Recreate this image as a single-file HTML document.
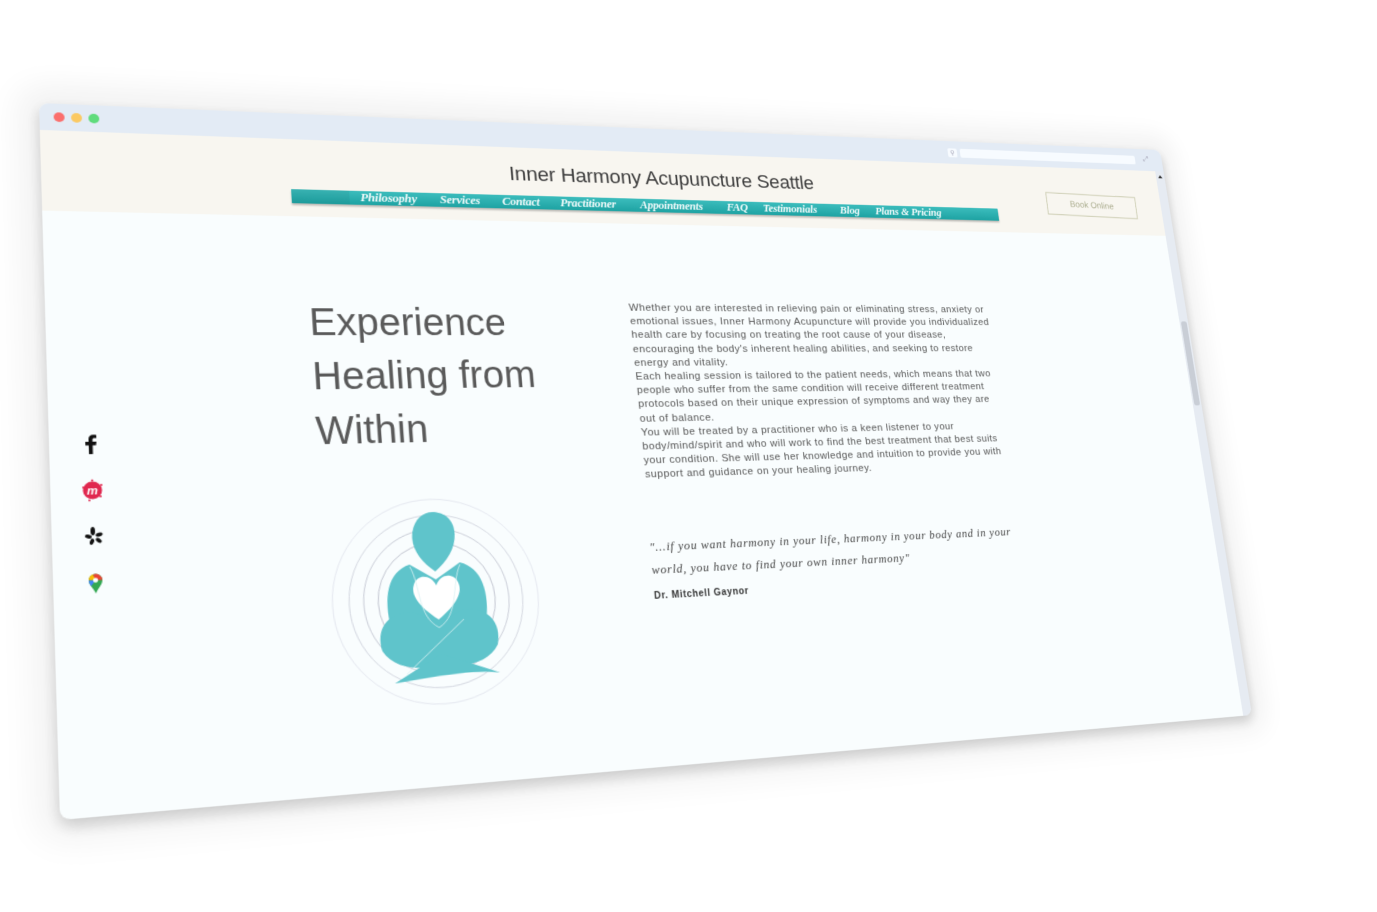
<!DOCTYPE html>
<html><head><meta charset="utf-8"><style>
html,body{margin:0;padding:0;background:#fff;width:1377px;height:912px;overflow:hidden}
#p{position:absolute;left:0;top:0;width:1280px;height:690px;transform-origin:0 0;
transform:matrix3d(1.10625,0.066521,0,0.00019868,0.023549,0.94502,0,-0.00011477,0,0,1,0,39,103,0,1);
border-radius:9px;background:#f9fdfe;overflow:hidden;
box-shadow:0 0 30px 20px rgba(0,0,0,0.05),0 6px 14px rgba(0,0,0,0.18);font-family:"Liberation Sans",sans-serif}
.tb{position:absolute;left:0;top:0;width:1280px;height:28px;background:#e3ebf5}
.dot{position:absolute;top:9px;width:10px;height:10px;border-radius:50%}
.hd{position:absolute;left:0;top:28px;width:1268px;height:83px;background:#f8f6f0}
.sb{position:absolute;right:0;top:28px;width:12px;height:662px;background:#e6ebf2}
.th{position:absolute;right:2px;top:191px;width:8px;height:104px;background:#c9ced6;border-radius:3px}
.title{position:absolute;left:433px;top:45px;width:410px;text-align:center;font-size:22.5px;color:#3d3d3d;letter-spacing:-0.2px}
.nav{position:absolute;left:236px;top:82px;width:807px;height:15px;background:linear-gradient(#3bbcbc,#1ea3a3);box-shadow:0 2px 2px rgba(0,0,0,.25)}
.nav span{position:absolute;top:-1px;font-family:"Liberation Serif",serif;font-style:italic;font-size:13px;color:#f2fbfb;white-space:nowrap;font-weight:bold;letter-spacing:-0.2px}
.book{position:absolute;left:1110px;top:61px;width:121px;height:26px;border:1px solid #c5c6a8;color:#a9ab8c;font-size:11px;text-align:center;line-height:26px;transform:rotate(1.5deg)}
h1{position:absolute;left:246px;top:195px;margin:0;font-weight:normal;font-size:40px;line-height:56px;color:#5a5a5a}
.body{position:absolute;left:581px;top:198px;font-size:11.6px;line-height:15.2px;color:#555;white-space:nowrap;letter-spacing:0.5px}
.q{position:absolute;left:578px;top:453px;font-family:"Liberation Serif",serif;font-style:italic;font-size:13px;line-height:24px;color:#444;letter-spacing:0.8px;white-space:nowrap}
.au{position:absolute;left:578px;top:511px;font-size:10px;font-weight:bold;color:#333;letter-spacing:0.7px}
.ic{position:absolute;left:26px;width:22px;height:22px}
</style></head><body>
<div id="p">
<div class="tb">
<div class="dot" style="left:13px;background:#fb6f6d"></div>
<div class="dot" style="left:29px;background:#fbc962"></div>
<div class="dot" style="left:45px;background:#5fdc7c"></div>
<div style="position:absolute;left:988px;top:9px;width:12px;height:11px;background:#f7fbff;border-radius:2px;color:#aab;font-size:8px;line-height:11px;text-align:center">&#9906;</div>
<div style="position:absolute;left:1004px;top:9px;width:238px;height:11px;background:#f7fbff;border-radius:2px"></div>
<div style="position:absolute;left:1254px;top:7px;color:#aab;font-size:9px">&#10530;</div>
</div>
<div class="hd"></div>
<div class="sb"><div class="th"></div><div style="position:absolute;left:3px;top:5px;width:0;height:0;border-left:3px solid transparent;border-right:3px solid transparent;border-bottom:4px solid #333"></div></div>
<div class="title">Inner Harmony Acupuncture Seattle</div>
<div class="nav">
<div style="position:absolute;left:0;top:0;width:58px;height:15px;background:rgba(0,0,0,.05)"></div>
<span style="left:69px">Philosophy</span><span style="left:151px">Services</span><span style="left:217px">Contact</span><span style="left:280px">Practitioner</span><span style="left:369px">Appointments</span><span style="left:469px">FAQ</span><span style="left:512px">Testimonials</span><span style="left:605px">Blog</span><span style="left:649px">Plans &amp; Pricing</span>
</div>
<div class="book">Book Online</div>
<h1>Experience<br>Healing from<br>Within</h1>
<div class="body">Whether you are interested in relieving pain or eliminating stress, anxiety or<br>emotional issues, Inner Harmony Acupuncture will provide you individualized<br>health care by focusing on treating the root cause of your disease,<br>encouraging the body's inherent healing abilities, and seeking to restore<br>energy and vitality.<br>Each healing session is tailored to the patient needs, which means that two<br>people who suffer from the same condition will receive different treatment<br>protocols based on their unique expression of symptoms and way they are<br>out of balance.<br>You will be treated by a practitioner who is a keen listener to your<br>body/mind/spirit and who will work to find the best treatment that best suits<br>your condition. She will use her knowledge and intuition to provide you with<br>support and guidance on your healing journey.</div>
<div class="q">"...if you want harmony in your life, harmony in your body and in your<br>world, you have to find your own inner harmony"</div>
<div class="au">Dr. Mitchell Gaynor</div>
<svg style="position:absolute;left:249px;top:404px" width="210" height="210" viewBox="0 0 210 210">
<g fill="none"><circle cx="105" cy="105" r="102" stroke="#e5e8f0" stroke-width="1"/><circle cx="105" cy="105" r="86" stroke="#cfd2dc" stroke-width=".9"/><circle cx="105" cy="105" r="72" stroke="#c4c7d2" stroke-width=".9"/><circle cx="105" cy="105" r="58" stroke="#bcc0cc" stroke-width=".9"/></g>
<g fill="#5fc4cb">
<path d="M105,76 C92,66 82,52 85,36 C88,22 97,16 106,16 C116,16 126,22 127,36 C128,52 118,66 105,76 Z"/>
<path d="M58,130 C52,100 58,74 80,68 L105,84 L130,68 C152,74 158,100 152,130 Z"/>
<path d="M48,152 C42,128 58,112 82,116 L105,128 L128,116 C152,112 168,128 162,152 C152,170 125,174 105,168 C85,174 58,170 48,152 Z"/>
<path d="M58,184 L105,158 L162,180 C140,176 110,178 58,184 Z"/>
</g>
<path d="M105,124 C86,110 79,98 83,88 C87,78 100,78 105,90 C110,78 123,78 127,88 C131,98 124,110 105,124 Z" fill="#fff"/>
<path d="M80,70 C90,90 84,120 105,132 M130,70 C120,90 126,120 105,132 M70,176 L130,125" stroke="#d9f1f3" stroke-width=".8" fill="none"/>
</svg>
<svg class="ic" style="top:332px" viewBox="0 0 22 22"><path d="M12.5,21 V12.5 H15.5 L16,9 H12.5 V7 C12.5,6 13,5.5 14,5.5 H16 V2.5 C15,2.3 14,2.2 13,2.2 C10.5,2.2 9,3.8 9,6.5 V9 H6 V12.5 H9 V21 Z" fill="#111"/></svg>
<svg class="ic" style="top:377px" viewBox="0 0 22 22"><circle cx="11" cy="11" r="8.5" fill="#e0284f"/><circle cx="3" cy="8" r="1" fill="#e0284f"/><circle cx="19" cy="6" r="1" fill="#e0284f"/><circle cx="18" cy="17" r="1" fill="#e0284f"/><circle cx="8" cy="20.5" r="1" fill="#e0284f"/><circle cx="11" cy="1.5" r="1" fill="#e0284f"/><text x="11" y="15" text-anchor="middle" font-family="Liberation Sans,sans-serif" font-style="italic" font-weight="bold" font-size="11" fill="#fff">m</text></svg>
<svg class="ic" style="top:421px" viewBox="0 0 22 22"><g fill="#111"><ellipse cx="10" cy="6" rx="2" ry="4"/><ellipse cx="15.5" cy="9.5" rx="3.2" ry="1.8" transform="rotate(-20 15.5 9.5)"/><ellipse cx="15" cy="15" rx="3" ry="1.8" transform="rotate(35 15 15)"/><ellipse cx="9" cy="16" rx="1.8" ry="3" transform="rotate(20 9 16)"/><ellipse cx="6" cy="11" rx="3" ry="1.8" transform="rotate(15 6 11)"/></g></svg>
<svg class="ic" style="top:465px" viewBox="0 0 22 22"><path d="M11,21 C9,16 5,13 5,8.5 A6,6 0 0 1 17,8.5 C17,13 13,16 11,21 Z" fill="#34a853"/><path d="M5,8.5 A6,6 0 0 1 9,2.9 L11,8.5 Z" fill="#fbbc04"/><path d="M9,2.9 A6,6 0 0 1 17,8.5 L11,8.5 Z" fill="#ea4335"/><path d="M5,8.5 L11,8.5 L7,14 C6,12.5 5,10.5 5,8.5 Z" fill="#4285f4"/><circle cx="11" cy="8.5" r="2.2" fill="#fff"/></svg>
</div>
</body></html>
